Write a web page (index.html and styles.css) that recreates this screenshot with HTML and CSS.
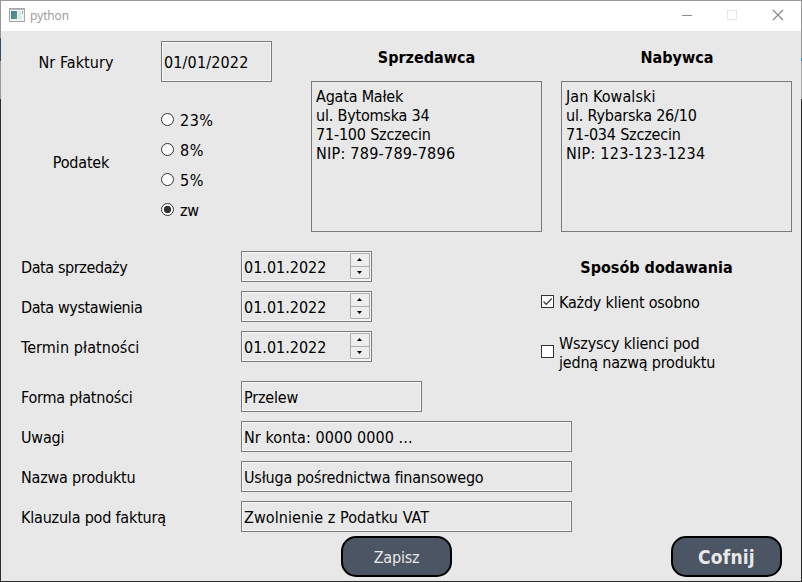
FILE: index.html
```html
<!DOCTYPE html>
<html lang="pl">
<head>
<meta charset="utf-8">
<title>python</title>
<link rel="stylesheet" href="styles.css">
</head>
<body>
<div class="window">
  <div class="edge edge-left"></div>
  <div class="frame">
    <header class="titlebar">
      <svg class="app-icon" width="16" height="14" viewBox="0 0 16 14">
        <defs><linearGradient id="g" x1="0" y1="0" x2="1" y2="1"><stop offset="0" stop-color="#4a79a5"/><stop offset="1" stop-color="#56a078"/></linearGradient></defs>
        <rect x=".5" y=".5" width="15" height="13" fill="#f2f2f2" stroke="#a5a8ab"/>
        <path d="M1 1.5h14" stroke="#b7babd"/>
        <rect x="2" y="3" width="6" height="8" fill="url(#g)"/>
        <path d="M9 3h3v8H9z" fill="#dfe4e6"/><path d="M13 3h1v3h-1z" fill="#9eaaa9"/>
      </svg>
      <span class="caption">python</span>
      <svg class="controls" width="104" height="12" viewBox="0 0 104 12">
        <path d="M0 6.5h10" stroke="#8c8c8c"/>
        <rect x="45.500" y="1.500" width="9" height="9" fill="none" stroke="#e6e6e6"/>
        <path d="M91 1l10 10M101 1L91 11" stroke="#858585" stroke-width="1.100"/>
      </svg>
    </header>
    <main class="content">
      <section class="top">
        <div class="invoice">
          <div class="label number-label wide">Nr Faktury</div>
          <div class="field number wider">01/01/2022</div>
          <div class="label tax-label">Podatek</div>
          <div class="radios">
            <div class="radio"><i></i><span class="percent">23%</span></div>
            <div class="radio"><i></i><span class="percent">8%</span></div>
            <div class="radio"><i></i><span class="percent">5%</span></div>
            <div class="radio checked"><i></i><span>zw</span></div>
          </div>
        </div>
        <div class="party">
          <h2>Sprzedawca</h2>
          <div class="address"><p>Agata Małek</p><p>ul. Bytomska 34</p><p>71-100 Szczecin</p><p class="taxid">NIP: 789-789-7896</p></div>
        </div>
        <div class="party">
          <h2>Nabywca</h2>
          <div class="address"><p class="wide">Jan Kowalski</p><p>ul. Rybarska 26/10</p><p>71-034 Szczecin</p><p class="taxid">NIP: 123-123-1234</p></div>
        </div>
      </section>
      <section class="middle">
        <div class="dates">
          <div class="row"><span class="label tight">Data sprzedaży</span><div class="field date"><span>01.01.2022</span><svg class="spin" width="20" height="27" viewBox="0 0 20 27"><path d="M0 0h20v27H0z" fill="#f5f5f5"/><path d="M.5.5h19v25H.5zM.5 13.500h19" fill="#ededed" stroke="#adadad"/><path d="M7 8h5l-2.500-3zM7 18h5l-2.500 3z"/></svg></div></div>
          <div class="row"><span class="label tight">Data wystawienia</span><div class="field date"><span>01.01.2022</span><svg class="spin" width="20" height="27" viewBox="0 0 20 27"><path d="M0 0h20v27H0z" fill="#f5f5f5"/><path d="M.5.5h19v25H.5zM.5 13.500h19" fill="#ededed" stroke="#adadad"/><path d="M7 8h5l-2.500-3zM7 18h5l-2.500 3z"/></svg></div></div>
          <div class="row"><span class="label wide">Termin płatności</span><div class="field date"><span>01.01.2022</span><svg class="spin" width="20" height="27" viewBox="0 0 20 27"><path d="M0 0h20v27H0z" fill="#f5f5f5"/><path d="M.5.5h19v25H.5zM.5 13.500h19" fill="#ededed" stroke="#adadad"/><path d="M7 8h5l-2.500-3zM7 18h5l-2.500 3z"/></svg></div></div>
        </div>
        <div class="mode">
          <h2>Sposób dodawania</h2>
          <div class="check first"><svg width="13" height="13" viewBox="0 0 13 13"><rect x=".5" y=".5" width="12" height="12" fill="#fff" stroke="#333"/><path d="M2.500 6.500l2.700 2.800L10.700 3.500" fill="none" stroke="#333" stroke-width="1.200"/></svg><span>Każdy klient osobno</span></div>
          <div class="check second"><svg width="13" height="13" viewBox="0 0 13 13"><rect x=".5" y=".5" width="12" height="12" fill="#fff" stroke="#333"/></svg><span>Wszyscy klienci pod<br>jedną nazwą produktu</span></div>
        </div>
      </section>
      <section class="details">
        <div class="row"><span class="label">Forma płatności</span><div class="field short">Przelew</div></div>
        <div class="row"><span class="label">Uwagi</span><div class="field long wide">Nr konta: 0000 0000 ...</div></div>
        <div class="row"><span class="label">Nazwa produktu</span><div class="field long">Usługa pośrednictwa finansowego</div></div>
        <div class="row"><span class="label">Klauzula pod fakturą</span><div class="field long wide">Zwolnienie z Podatku VAT</div></div>
      </section>
      <footer class="actions">
        <button class="save">Zapisz</button>
        <button class="back">Cofnij</button>
      </footer>
    </main>
  </div>
  <div class="edge edge-right"></div>
</div>
</body>
</html>
```

FILE: styles.css
```css
* { box-sizing: border-box; }
body {
  margin: 0;
  font: 16px/19px "DejaVu Sans Condensed", "DejaVu Sans", sans-serif;
  font-stretch: condensed;
  letter-spacing: -0.2px;
  color: #000;
}
h2, p { margin: 0; }
.tight { letter-spacing: -0.4px; }
.wide { letter-spacing: 0.07px; }
.wider { letter-spacing: 0.15px; }
.taxid { letter-spacing: 0.25px; }
.percent { letter-spacing: 0.5px; }
.window {
  width: 802px;
  height: 582px;
  display: grid;
  grid-template-columns: 1px 800px 1px;
  background: #e8e8e8;
  border-top: 1px solid #999;
  border-bottom: 1px solid #2b2b2b;
}
.edge-left { background: linear-gradient(#999 37px, #2f4c69 37px 60px, #999 60px 98px, #2b2b2b 98px); }
.edge-right { background: linear-gradient(#999 57px, #2277b5 57px 60px, #aaa 60px 98px, #2b2b2b 98px); }
.titlebar {
  height: 30px;
  background: #fff;
  display: flex;
  align-items: center;
  padding: 0 15px 2px 8px;
}
.caption {
  margin-left: 5px;
  padding-top: 2px;
  font: 12px/16px "Open Sans", sans-serif;
  letter-spacing: -0.1px;
  color: #999;
}
.controls { margin-left: auto; }
.content { padding: 10px 9px 0 20px; }
.top {
  display: grid;
  grid-template-columns: 270px 231px 231px;
  column-gap: 20px;
  height: 191px;
}
.top .party + .party { margin-left: -1px; }
.invoice {
  display: grid;
  grid-template-columns: 110px 111px;
  grid-template-rows: 41px 120px;
  column-gap: 30px;
  row-gap: 23px;
  align-items: center;
}
.invoice .label { text-align: center; }
.number-label { padding-top: 2px; }
.tax-label { padding-left: 10px; padding-bottom: 6px; }
.field {
  height: 31px;
  border: 1px solid #7a7a7a;
  box-shadow: inset 0 0 0 1px #f8f8f8;
  display: flex;
  align-items: center;
  padding: 2px 1px 0 2px;
}
.number { height: 41px; padding-top: 1px; }
.radios { position: relative; top: -1px; }
.radio {
  height: 30px;
  display: flex;
  align-items: center;
  gap: 6px;
}
.radio i {
  width: 13px;
  height: 13px;
  border: 1px solid #333;
  border-radius: 50%;
  background: #fff;
}
.radio.checked i { background: radial-gradient(circle, #333 3.400px, #fff 4.100px); }
.radio span { padding-top: 3px; }
h2 {
  font-size: 16px;
  line-height: 19px;
  font-weight: bold;
  letter-spacing: 0;
  text-align: center;
}
.party h2 { margin-top: 7px; }
.address {
  height: 151px;
  width: 231px;
  margin-top: 14px;
  border: 1px solid #7a7a7a;
  padding: 5px 4px;
}
.middle { display: flex; align-items: flex-start; margin-top: 19px; height: 111px; }
.dates, .details { display: grid; row-gap: 9px; }
.row { display: grid; grid-template-columns: 220px auto; justify-content: start; align-items: center; }
.row .label { padding-top: 2px; }
.date { width: 131px; justify-content: space-between; padding-top: 0; letter-spacing: 0; }
.date span { padding-top: 2px; }
.spin { display: block; }
.mode { width: 231px; margin-left: 169px; padding-top: 7px; }
.check { display: flex; align-items: center; gap: 5px; margin-top: 22px; }
.check svg { position: relative; top: -1px; }
.check.second svg { top: -2px; }
.check.first { margin-top: 16px; }
.details { margin-top: 19px; }
.short { width: 181px; }
.long { width: 331px; }
.actions { display: flex; justify-content: space-between; margin-top: 4px; padding: 0 10px 0 320px; }
button {
  width: 111px;
  height: 41px;
  border: 2px solid #000;
  border-radius: 15px;
  background: #4b5563;
  color: #e8e8e8;
  font: inherit;
  letter-spacing: inherit;
  padding: 1px 0 0;
}
.back { font-size: 19px; font-weight: bold; letter-spacing: 0.2px; }
```
